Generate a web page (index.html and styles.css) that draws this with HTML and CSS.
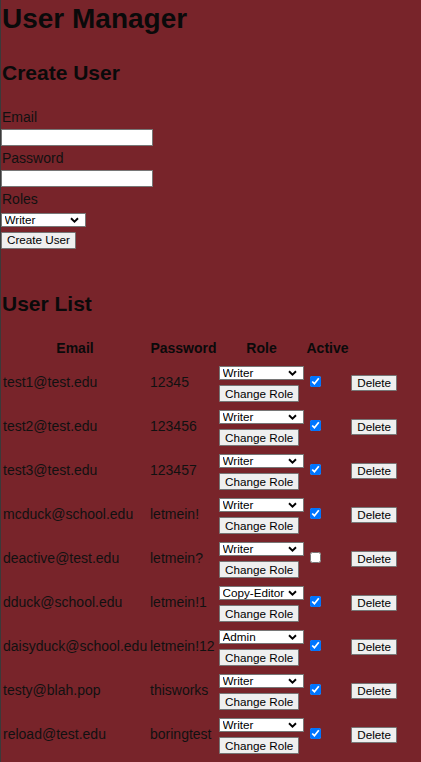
FILE: index.html
```html
<!DOCTYPE html>
<html lang="en">
<head>
<meta charset="utf-8">
<title>User Manager</title>
<link rel="stylesheet" href="styles.css">
</head>
<body>
<h1 class="page-title">User Manager</h1>

<section class="create">
  <h2 class="section-title">Create User</h2>
  <form class="create-form">
    <label class="field-label field-label--first" for="email">Email</label>
    <input class="text-input" id="email" type="text">
    <label class="field-label" for="password">Password</label>
    <input class="text-input" id="password" type="password">
    <label class="field-label" for="roles">Roles</label>
    <select class="role-select role-select--form" id="roles">
      <option>Writer</option>
      <option>Copy-Editor</option>
      <option>Admin</option>
    </select>
    <button class="btn btn--create" type="button">Create User</button>
  </form>
</section>

<section class="list">
  <h2 class="section-title section-title--list">User List</h2>
  <table class="user-table">
    <colgroup>
      <col class="col-email">
      <col class="col-password">
      <col class="col-role">
      <col class="col-active">
      <col class="col-delete">
    </colgroup>
    <thead>
      <tr class="head-row">
        <th>Email</th>
        <th>Password</th>
        <th>Role</th>
        <th>Active</th>
        <th></th>
      </tr>
    </thead>
    <tbody>
      <tr class="user-row">
        <td class="cell-email">test1@test.edu</td>
        <td class="cell-password">12345</td>
        <td class="cell-role"><div class="role-stack"><select class="role-select"><option selected>Writer</option><option>Copy-Editor</option><option>Admin</option></select><button class="btn btn--small" type="button">Change Role</button></div></td>
        <td class="cell-active"><input class="active-box" type="checkbox" checked></td>
        <td class="cell-delete"><button class="btn btn--small" type="button">Delete</button></td>
      </tr>
      <tr class="user-row">
        <td class="cell-email">test2@test.edu</td>
        <td class="cell-password">123456</td>
        <td class="cell-role"><div class="role-stack"><select class="role-select"><option selected>Writer</option><option>Copy-Editor</option><option>Admin</option></select><button class="btn btn--small" type="button">Change Role</button></div></td>
        <td class="cell-active"><input class="active-box" type="checkbox" checked></td>
        <td class="cell-delete"><button class="btn btn--small" type="button">Delete</button></td>
      </tr>
      <tr class="user-row">
        <td class="cell-email">test3@test.edu</td>
        <td class="cell-password">123457</td>
        <td class="cell-role"><div class="role-stack"><select class="role-select"><option selected>Writer</option><option>Copy-Editor</option><option>Admin</option></select><button class="btn btn--small" type="button">Change Role</button></div></td>
        <td class="cell-active"><input class="active-box" type="checkbox" checked></td>
        <td class="cell-delete"><button class="btn btn--small" type="button">Delete</button></td>
      </tr>
      <tr class="user-row">
        <td class="cell-email">mcduck@school.edu</td>
        <td class="cell-password">letmein!</td>
        <td class="cell-role"><div class="role-stack"><select class="role-select"><option selected>Writer</option><option>Copy-Editor</option><option>Admin</option></select><button class="btn btn--small" type="button">Change Role</button></div></td>
        <td class="cell-active"><input class="active-box" type="checkbox" checked></td>
        <td class="cell-delete"><button class="btn btn--small" type="button">Delete</button></td>
      </tr>
      <tr class="user-row">
        <td class="cell-email">deactive@test.edu</td>
        <td class="cell-password">letmein?</td>
        <td class="cell-role"><div class="role-stack"><select class="role-select"><option selected>Writer</option><option>Copy-Editor</option><option>Admin</option></select><button class="btn btn--small" type="button">Change Role</button></div></td>
        <td class="cell-active"><input class="active-box" type="checkbox"></td>
        <td class="cell-delete"><button class="btn btn--small" type="button">Delete</button></td>
      </tr>
      <tr class="user-row">
        <td class="cell-email">dduck@school.edu</td>
        <td class="cell-password">letmein!1</td>
        <td class="cell-role"><div class="role-stack"><select class="role-select"><option>Writer</option><option selected>Copy-Editor</option><option>Admin</option></select><button class="btn btn--small" type="button">Change Role</button></div></td>
        <td class="cell-active"><input class="active-box" type="checkbox" checked></td>
        <td class="cell-delete"><button class="btn btn--small" type="button">Delete</button></td>
      </tr>
      <tr class="user-row">
        <td class="cell-email">daisyduck@school.edu</td>
        <td class="cell-password">letmein!12</td>
        <td class="cell-role"><div class="role-stack"><select class="role-select"><option>Writer</option><option>Copy-Editor</option><option selected>Admin</option></select><button class="btn btn--small" type="button">Change Role</button></div></td>
        <td class="cell-active"><input class="active-box" type="checkbox" checked></td>
        <td class="cell-delete"><button class="btn btn--small" type="button">Delete</button></td>
      </tr>
      <tr class="user-row">
        <td class="cell-email">testy@blah.pop</td>
        <td class="cell-password">thisworks</td>
        <td class="cell-role"><div class="role-stack"><select class="role-select"><option selected>Writer</option><option>Copy-Editor</option><option>Admin</option></select><button class="btn btn--small" type="button">Change Role</button></div></td>
        <td class="cell-active"><input class="active-box" type="checkbox" checked></td>
        <td class="cell-delete"><button class="btn btn--small" type="button">Delete</button></td>
      </tr>
      <tr class="user-row">
        <td class="cell-email">reload@test.edu</td>
        <td class="cell-password">boringtest</td>
        <td class="cell-role"><div class="role-stack"><select class="role-select"><option selected>Writer</option><option>Copy-Editor</option><option>Admin</option></select><button class="btn btn--small" type="button">Change Role</button></div></td>
        <td class="cell-active"><input class="active-box" type="checkbox" checked></td>
        <td class="cell-delete"><button class="btn btn--small" type="button">Delete</button></td>
      </tr>
    </tbody>
  </table>
</section>
</body>
</html>
```
FILE: styles.css
```css
html {
  background: #78242a;
}

body {
  margin: 0;
  padding: 0;
  border-left: 1px solid #3a3a3a;
  min-height: 762px;
  box-sizing: border-box;
  font-family: "Liberation Sans", Arial, sans-serif;
  font-size: 14px;
  line-height: 16px;
  color: #111;
}

.page-title {
  margin: 3px 0 0;
  padding-left: 1px;
  font-size: 28px;
  line-height: 32px;
  font-weight: bold;
  color: #0a0a0a;
}

.section-title {
  margin: 26.4px 0 0;
  padding-left: 1px;
  font-size: 21px;
  line-height: 24px;
  font-weight: bold;
  color: #0a0a0a;
}

.section-title--list {
  margin-top: 42.7px;
}

.create-form {
  display: flex;
  flex-direction: column;
  align-items: flex-start;
  margin: 23.45px 0 0;
}

.field-label {
  display: block;
  margin-top: 3.8px;
  padding-left: 1px;
  line-height: 16px;
}

.field-label--first {
  margin-top: 0;
}

.text-input {
  box-sizing: border-box;
  width: 152px;
  height: 17px;
  margin: 4.3px 0 0;
  padding: 0 2px;
  border: 1px solid #767676;
  border-radius: 0;
  background: #fff;
  font-family: "Liberation Sans", Arial, sans-serif;
  font-size: 11.7px;
  outline: none;
}

.role-select {
  -webkit-appearance: none;
  appearance: none;
  box-sizing: border-box;
  width: 84.7px;
  height: 14px;
  margin: 0;
  padding: 0 14px 0 2.5px;
  border: 1px solid #767676;
  border-radius: 0;
  background: #fff url("data:image/svg+xml,%3Csvg xmlns='http://www.w3.org/2000/svg' width='9' height='6' viewBox='0 0 9 6'%3E%3Cpath d='M1 1.2l3.5 3.4 3.5-3.4' fill='none' stroke='%23000' stroke-width='1.9'/%3E%3C/svg%3E") no-repeat right 6px center;
  background-size: 9px 6px;
  font-family: "Liberation Sans", Arial, sans-serif;
  font-size: 11.7px;
  line-height: 12px;
  color: #000;
}

.role-select--form {
  width: 85px;
  margin-top: 5.6px;
}

.btn {
  box-sizing: border-box;
  margin: 0;
  padding: 0 5px;
  border: 1px solid #767676;
  border-radius: 1px;
  background: #efefef;
  font-family: "Liberation Sans", Arial, sans-serif;
  font-size: 11.7px;
  line-height: 12px;
  color: #000;
  white-space: nowrap;
}

.btn--create {
  height: 17px;
  width: 75px;
  margin-top: 5.35px;
}

.btn--small {
  height: 16.4px;
}

.user-table {
  table-layout: fixed;
  width: 398px;
  margin-top: 20.8px;
  border-collapse: separate;
  border-spacing: 0;
}

.col-email { width: 148px; }
.col-password { width: 69px; }
.col-role { width: 87px; }
.col-active { width: 45px; }
.col-delete { width: 49px; }

.head-row {
  height: 24px;
}

.head-row th {
  padding: 0;
  font-size: 14px;
  line-height: 16px;
  font-weight: bold;
  text-align: center;
  vertical-align: middle;
  color: #0a0a0a;
}

.user-row {
  height: 44px;
}

.user-row td {
  padding: 0;
  vertical-align: middle;
  white-space: nowrap;
}

.cell-email {
  padding-left: 2px !important;
  padding-bottom: 1px !important;
}

.cell-password {
  padding-left: 1px !important;
  padding-bottom: 1px !important;
}

.cell-role {
  padding-left: 1px !important;
  padding-top: 3.4px !important;
}

.role-stack {
  display: flex;
  flex-direction: column;
  align-items: flex-start;
  gap: 5px;
}

.cell-active {
  padding-left: 1px !important;
}

.active-box {
  display: block;
  width: 11px;
  height: 11px;
  margin: 0 0 1.5px 4px;
}

.cell-delete {
  padding-left: 1.3px !important;
}
```
